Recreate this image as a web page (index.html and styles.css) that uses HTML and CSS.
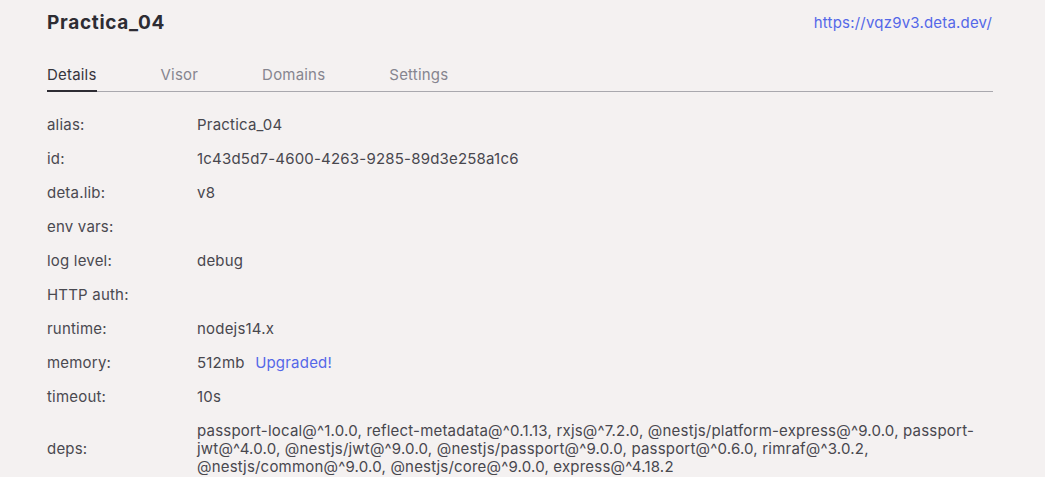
FILE: index.html
```html
<!DOCTYPE html>
<html>
<head>
<meta charset="utf-8">
<link rel="stylesheet" href="styles.css">
</head>
<body>
<div class="page">
  <header class="head">
    <h1 class="title">Practica_04</h1>
    <a class="url" href="#">https://vqz9v3.deta.dev/</a>
  </header>
  <nav class="tabs">
    <span class="tab active">Details</span>
    <span class="tab">Visor</span>
    <span class="tab">Domains</span>
    <span class="tab">Settings</span>
  </nav>
  <div class="rows">
    <div class="row"><span class="label">alias:</span><span class="value">Practica_04</span></div>
    <div class="row"><span class="label">id:</span><span class="value">1c43d5d7-4600-4263-9285-89d3e258a1c6</span></div>
    <div class="row"><span class="label">deta.lib:</span><span class="value">v8</span></div>
    <div class="row"><span class="label">env vars:</span><span class="value"></span></div>
    <div class="row"><span class="label">log level:</span><span class="value">debug</span></div>
    <div class="row"><span class="label">HTTP auth:</span><span class="value"></span></div>
    <div class="row"><span class="label">runtime:</span><span class="value">nodejs14.x</span></div>
    <div class="row"><span class="label">memory:</span><span class="value">512mb <a class="link" href="#">Upgraded!</a></span></div>
    <div class="row"><span class="label">timeout:</span><span class="value">10s</span></div>
    <div class="row"><span class="label">deps:</span><span class="value">passport-local@^1.0.0, reflect-metadata@^0.1.13, rxjs@^7.2.0, @nestjs/platform-express@^9.0.0, passport-jwt@^4.0.0, @nestjs/jwt@^9.0.0, @nestjs/passport@^9.0.0, passport@^0.6.0, rimraf@^3.0.2, @nestjs/common@^9.0.0, @nestjs/core@^9.0.0, express@^4.18.2</span></div>
  </div>
</div>
</body>
</html>
```
FILE: styles.css
```css
html, body {
  margin: 0;
  padding: 0;
  background: #f4f1f1;
}
body {
  font-family: Inter, "Liberation Sans", sans-serif;
  color: #45444c;
  font-size: 15px;
  letter-spacing: 0.2px;
}
.page {
  width: 946px;
  margin-left: 47px;
  padding-top: 10px;
}
.head {
  display: flex;
  justify-content: space-between;
  align-items: center;
  height: 24px;
}
.title {
  margin: 0;
  font-size: 19px;
  font-weight: 700;
  color: #2d2c33;
  letter-spacing: 0.7px;
}
.url {
  color: #5468e8;
  text-decoration: none;
  font-size: 15px;
  margin-right: 1px;
}
.tabs {
  display: flex;
  gap: 64px;
  margin-top: 31px;
  border-bottom: 1px solid #a9a8ae;
}
.tab {
  color: #86858f;
  padding-bottom: 5px;
  line-height: 20px;
}
.tab.active {
  color: #36353c;
  border-bottom: 2px solid #2d2c33;
  margin-bottom: -1px;
}
.rows {
  padding-top: 16px;
}
.row {
  display: flex;
  align-items: center;
  padding: 8px 0;
  line-height: 18px;
}
.label {
  width: 150px;
  flex: none;
  color: #4a4950;
}
.value {
  flex: 1;
  color: #48474e;
}
.link {
  color: #5468e8;
  text-decoration: none;
  margin-left: 6px;
}
```
